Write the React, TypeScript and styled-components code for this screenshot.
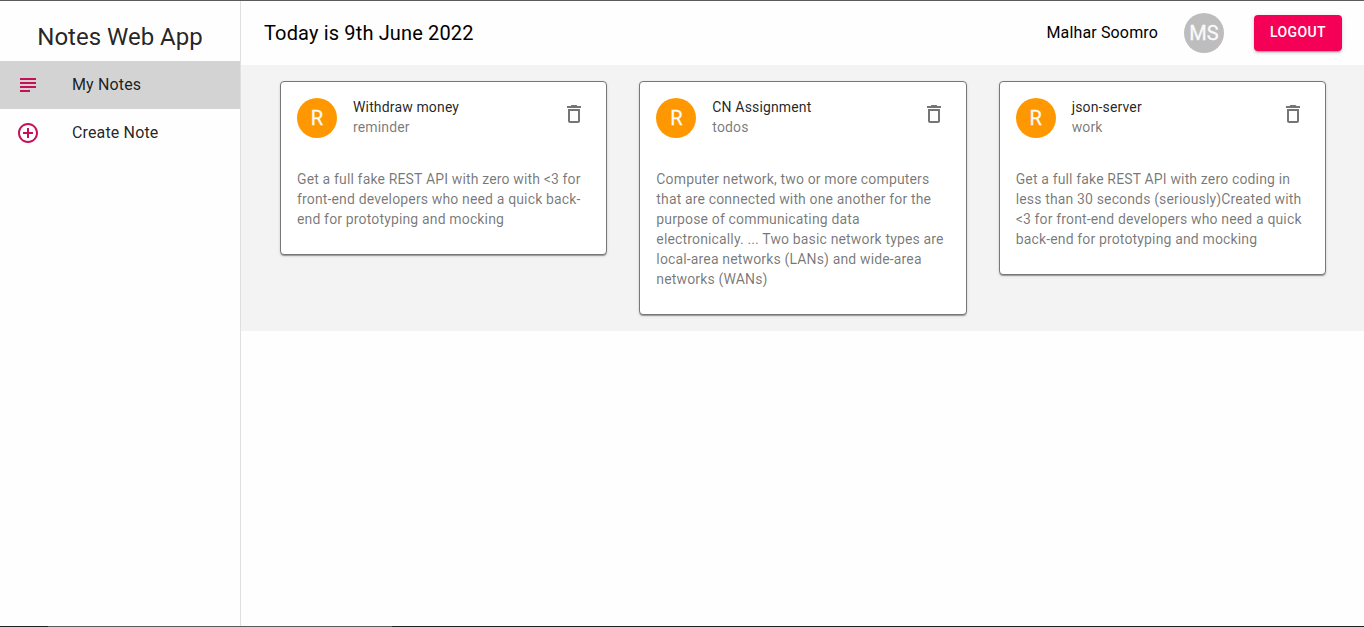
import React from 'react';
import styled, { createGlobalStyle } from 'styled-components';

const GlobalStyle = createGlobalStyle`
  *, *::before, *::after { box-sizing: border-box; }
  body {
    margin: 0;
    background: #fefefe;
    color: rgba(0, 0, 0, 0.87);
    font-family: Roboto, "Liberation Sans", sans-serif;
    font-size: 14px;
    line-height: 20px;
    letter-spacing: 0.01071em;
  }
`;

const Page = styled.div`
  display: flex;
  flex-direction: column;
  height: 627px;
  overflow: hidden;
`;

const TopEdge = styled.div`
  flex: none;
  height: 1px;
  background: #5c5a5c;
`;

const BottomEdge = styled.div`
  flex: none;
  height: 1px;
  background: linear-gradient(to right, #1f1f1f 48px, #5a5a5a 48px, #5a5a5a 392px, #1f1f1f 392px);
`;

const Shell = styled.div`
  display: flex;
  flex: 1;
  min-height: 0;
`;

const Sidebar = styled.nav`
  flex: none;
  width: 241px;
  border-right: 1px solid #dfdfdf;
`;

const Brand = styled.h1`
  margin: 0;
  height: 60px;
  padding-top: 20px;
  font-size: 24px;
  font-weight: 400;
  line-height: 32px;
  letter-spacing: 0;
  text-align: center;
`;

const NavItem = styled.a<{ $active?: boolean }>`
  display: flex;
  align-items: center;
  height: 48px;
  padding: 0 16px;
  background: ${(p) => (p.$active ? '#d3d3d3' : 'transparent')};
  font-size: 16px;
  line-height: 24px;
  letter-spacing: 0.00938em;
`;

const NavIcon = styled.span`
  display: flex;
  flex: none;
  width: 56px;
  color: #c51158;
`;

const Glyph = styled.svg`
  display: block;
  width: 24px;
  height: 24px;
  fill: currentColor;
`;

const Main = styled.main`
  flex: 1;
  min-width: 0;
`;

const Toolbar = styled.header`
  display: flex;
  align-items: center;
  height: 64px;
  padding: 0 22px 0 23px;
  color: #000;
`;

const Today = styled.p`
  flex: 1;
  margin: 0;
  font-size: 20px;
  line-height: 32px;
  letter-spacing: 0.0075em;
`;

const UserName = styled.p`
  margin: 0;
  font-size: 16px;
  line-height: 24px;
  letter-spacing: 0.00938em;
`;

const Avatar = styled.div<{ $color: string }>`
  display: flex;
  flex: none;
  align-items: center;
  justify-content: center;
  width: 40px;
  height: 40px;
  border-radius: 50%;
  background: ${(p) => p.$color};
  color: #fafafa;
  font-size: 20px;
  line-height: 20px;
  letter-spacing: 0;
  -webkit-text-stroke: 0.3px currentColor;
`;

const UserAvatar = styled(Avatar)`
  margin: 0 30px 0 26px;
`;

const LogoutButton = styled.button`
  width: 88px;
  height: 36px;
  padding: 0 0 2px;
  border: 0;
  border-radius: 4px;
  background: #f50057;
  color: #fff;
  font: 500 14px/24px Roboto, "Liberation Sans", sans-serif;
  letter-spacing: 0.02857em;
  text-transform: uppercase;
  box-shadow: 0 3px 1px -2px rgba(0, 0, 0, 0.2), 0 2px 2px rgba(0, 0, 0, 0.14), 0 1px 5px rgba(0, 0, 0, 0.12);
`;

const Board = styled.section`
  display: grid;
  grid-template-columns: repeat(3, 1fr);
  align-items: start;
  gap: 32px;
  padding: 16px 38px 16px 39px;
  background: #f3f3f3;
`;

const Card = styled.article`
  border: 1px solid #777;
  border-radius: 4px;
  background: #fff;
  box-shadow: 0 2px 1px -1px rgba(0, 0, 0, 0.2), 0 1px 1px rgba(0, 0, 0, 0.14), 0 1px 3px rgba(0, 0, 0, 0.12);
`;

const CardHead = styled.div`
  display: flex;
  align-items: center;
  gap: 16px;
  padding: 16px;
`;

const CardHeading = styled.div`
  flex: 1;
  margin: -1px 0 1px;
`;

const CardTitle = styled.div`
  color: rgba(0, 0, 0, 0.87);
`;

const Muted = styled.div`
  color: rgba(0, 0, 0, 0.54);
`;

const DeleteButton = styled.button`
  align-self: flex-start;
  margin: -8px -8px -8px 0;
  padding: 12px;
  border: 0;
  background: none;
  color: rgba(0, 0, 0, 0.54);
`;

const CardBody = styled(Muted)`
  padding: 15px 16px 25px;
`;

const SubjectIcon = () => (
  <Glyph viewBox="0 0 24 24">
    <path d="M14 17H4v2h10v-2zm6-8H4v2h16V9zM4 15h16v-2H4v2zM4 5v2h16V5H4z" />
  </Glyph>
);

const AddIcon = () => (
  <Glyph viewBox="0 0 24 24">
    <path d="M13 7h-2v4H7v2h4v4h2v-4h4v-2h-4V7zm-1-5C6.48 2 2 6.48 2 12s4.480 10 10 10 10-4.480 10-10S17.520 2 12 2zm0 18c-4.410 0-8-3.590-8-8s3.590-8 8-8 8 3.590 8 8-3.590 8-8 8z" />
  </Glyph>
);

const DeleteIcon = () => (
  <Glyph viewBox="0 0 24 24">
    <path d="M6 19c0 1.100.9 2 2 2h8c1.100 0 2-.9 2-2V7H6v12zM8 9h8v10H8V9zm7.500-5l-1-1h-5l-1 1H5v2h14V4h-3.500z" />
  </Glyph>
);

const notes = [
  {
    title: 'Withdraw money',
    category: 'reminder',
    details:
      'Get a full fake REST API with zero with <3 for front-end developers who need a quick back-end for prototyping and mocking',
  },
  {
    title: 'CN Assignment',
    category: 'todos',
    details:
      'Computer network, two or more computers that are connected with one another for the purpose of communicating data electronically. ... Two basic network types are local-area networks (LANs) and wide-area networks (WANs)',
  },
  {
    title: 'json-server',
    category: 'work',
    details:
      'Get a full fake REST API with zero coding in less than 30 seconds (seriously)Created with <3 for front-end developers who need a quick back-end for prototyping and mocking',
  },
];

export default function App() {
  return (
    <Page>
      <GlobalStyle />
      <TopEdge />
      <Shell>
        <Sidebar>
          <Brand>Notes Web App</Brand>
          <NavItem $active>
            <NavIcon><SubjectIcon /></NavIcon>
            My Notes
          </NavItem>
          <NavItem>
            <NavIcon><AddIcon /></NavIcon>
            Create Note
          </NavItem>
        </Sidebar>
        <Main>
          <Toolbar>
            <Today>Today is 9th June 2022</Today>
            <UserName>Malhar Soomro</UserName>
            <UserAvatar $color="#bdbdbd">MS</UserAvatar>
            <LogoutButton>Logout</LogoutButton>
          </Toolbar>
          <Board>
            {notes.map((note) => (
              <Card key={note.title}>
                <CardHead>
                  <Avatar $color="#ff9800">R</Avatar>
                  <CardHeading>
                    <CardTitle>{note.title}</CardTitle>
                    <Muted>{note.category}</Muted>
                  </CardHeading>
                  <DeleteButton aria-label="Delete">
                    <DeleteIcon />
                  </DeleteButton>
                </CardHead>
                <CardBody>{note.details}</CardBody>
              </Card>
            ))}
          </Board>
        </Main>
      </Shell>
      <BottomEdge />
    </Page>
  );
}
